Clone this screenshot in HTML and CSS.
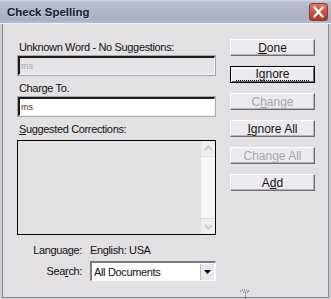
FILE: index.html
```html
<!DOCTYPE html>
<html>
<head>
<meta charset="utf-8">
<link rel="stylesheet" href="styles.css">
</head>
<body>
<div class="window">
  <div class="titlebar">
    <span class="title">Check Spelling</span>
    <span class="close">
      <svg width="19" height="18" viewBox="0 0 19 18"><path d="M5.5 4.5 L13.5 13.5 M13.5 4.5 L5.5 13.5" stroke="#fff" stroke-width="2.2" stroke-linecap="square"/></svg>
    </span>
  </div>
  <div class="client">
    <div class="left">
      <div class="label first">Unknown Word - No Suggestions:</div>
      <div class="field disabled"><span class="word">ms</span></div>
      <div class="label">Charge To.</div>
      <div class="field"><span class="word dark">ms</span></div>
      <div class="label"><u>S</u>uggested Corrections:</div>
      <div class="list">
        <div class="listbody"></div>
        <div class="scroll">
          <div class="sbtn"><svg width="13" height="13" viewBox="0 0 13 13"><path d="M3 8 L6.5 4.5 L10 8" fill="none" stroke="#d4d0c0" stroke-width="2"/></svg></div>
          <div class="strack"></div>
          <div class="sbtn"><svg width="13" height="13" viewBox="0 0 13 13"><path d="M3 5 L6.5 8.5 L10 5" fill="none" stroke="#d4d0c0" stroke-width="2"/></svg></div>
        </div>
      </div>
      <div class="row lang">
        <span class="rlabel">Language:</span>
        <span class="rvalue">English: USA</span>
      </div>
      <div class="row search">
        <span class="rlabel">Sea<u>r</u>ch:</span>
        <div class="select">
          <span class="seltext">All Documents</span>
          <span class="drop"><svg width="7" height="4" viewBox="0 0 7 4"><path d="M0 0 H7 L3.5 4 Z" fill="#000"/></svg></span>
        </div>
      </div>
    </div>
    <div class="buttons">
      <div class="btn"><u>D</u>one</div>
      <div class="btn default"><span class="focus">I<u>g</u>nore</span></div>
      <div class="btn off">C<u>h</u>ange</div>
      <div class="btn"><u>I</u>gnore All</div>
      <div class="btn off">Change All</div>
      <div class="btn">A<u>d</u>d</div>
    </div>
    <div class="grip"><svg width="12" height="10" viewBox="0 0 12 10"><path d="M1 2h1M3 1h1M5 1h1M7 1h1M9 2h1M6 3h1M6 5h1M6 7h1M6 9h1M4 3h1M8 3h1" stroke="#555" stroke-width="1"/></svg></div>
  </div>
</div>
</body>
</html>
```

FILE: styles.css
```css
html, body {
  margin: 0;
  padding: 0;
  background: #e3e0e4;
}
body {
  font-family: "Liberation Sans", Arial, sans-serif;
  font-size: 11px;
  letter-spacing: -0.35px;
  color: #111;
}
.window {
  width: 331px;
  height: 299px;
  box-sizing: border-box;
  display: flex;
  flex-direction: column;
  background: #e3e0e4;
  border-left: 2px solid #cfcdd3;
  border-right: 2px solid #cfcdd3;
  border-bottom: 1px solid #cfcdd3;
}
.titlebar {
  height: 23px;
  margin: 0 -2px;
  padding: 0 3px 0 7px;
  display: flex;
  align-items: center;
  justify-content: space-between;
  background: linear-gradient(#d9dce5 0, #b9bfcf 2px, #aeb5c7 12px, #a9b0c3 20px, #b8bdcc 23px);
  border-bottom: 1px solid #eef0f4;
}
.title {
  font-family: "Liberation Sans", Arial, sans-serif;
  font-weight: bold;
  font-size: 11.5px;
  letter-spacing: 0;
  color: #1a1a26;
  text-shadow: 1px 1px 0 #c8ccd8;
  padding-top: 1px;
}
.close {
  width: 19px;
  height: 18px;
  box-sizing: border-box;
  border: 1px solid #8a3a34;
  border-radius: 3px;
  background: linear-gradient(#e27a62, #c84a38 60%, #b23a2c);
  display: flex;
  margin-top: 1px;
}
.close svg {
  margin: -1px;
}
.client {
  flex: 1;
  position: relative;
  display: flex;
  gap: 14px;
  padding: 15px 13px 0 14px;
  border-left: 1px solid #85838a;
  border-right: 1px solid #85838a;
  border-bottom: 1px solid #85838a;
}
.left {
  width: 199px;
  display: flex;
  flex-direction: column;
}
.label {
  height: 13px;
  line-height: 13px;
  padding-left: 2px;
  margin-top: 7px;
}
.label.first {
  margin-top: 2px;
}
.field {
  margin-top: 2px;
  height: 19px;
  box-sizing: border-box;
  background: #fff;
  border-top: 2px solid #1a1a1a;
  border-left: 2px solid #1a1a1a;
  border-right: 1px solid #f6f6f8;
  border-bottom: 1px solid #f6f6f8;
  box-shadow: 0 0 0 1px #a9a7ad;
  margin-left: 1px;
  margin-right: 1px;
  display: flex;
  align-items: center;
}
.field.disabled {
  background: #e6e3e7;
}
.word {
  font-size: 9px;
  letter-spacing: 0;
  color: #aaa8ac;
  padding-left: 1px;
}
.word.dark {
  color: #5a1e1e;
}
.list {
  margin-top: 4px;
  height: 95px;
  box-sizing: border-box;
  border: 1px solid #000;
  display: flex;
  background: #e3e0e4;
}
.listbody {
  flex: 1;
}
.scroll {
  width: 14px;
  display: flex;
  flex-direction: column;
  background: #f7f6f8;
}
.sbtn {
  height: 15px;
  display: flex;
  align-items: center;
  justify-content: center;
  background: #f0eff0;
  border-bottom: 1px solid #dedbd0;
}
.sbtn:last-child {
  border-bottom: 0;
  border-top: 1px solid #dedbd0;
}
.strack {
  flex: 1;
}
.row {
  display: flex;
  align-items: center;
  gap: 8px;
}
.rlabel {
  width: 65px;
  text-align: right;
}
.lang {
  margin-top: 8px;
  height: 13px;
}
.search {
  margin-top: 5px;
}
.select {
  width: 126px;
  height: 20px;
  box-sizing: border-box;
  border-top: 2px solid #7b7a80;
  border-left: 2px solid #7b7a80;
  border-right: 1px solid #f8f8fa;
  border-bottom: 1px solid #f8f8fa;
  background: #fff;
  display: flex;
  align-items: center;
  justify-content: space-between;
}
.seltext {
  padding-left: 2px;
}
.drop {
  width: 14px;
  height: 16px;
  box-sizing: border-box;
  background: #e9e8ec;
  border-left: 1px solid #bdbcc2;
  display: flex;
  align-items: center;
  justify-content: center;
  margin-right: 1px;
}
.buttons {
  width: 85px;
  display: flex;
  flex-direction: column;
  gap: 10px;
}
.btn {
  height: 17px;
  box-sizing: border-box;
  display: flex;
  align-items: center;
  justify-content: center;
  font-size: 12px;
  letter-spacing: 0;
  background: #eceaee;
  border-top: 1px solid #fcfcfd;
  border-left: 1px solid #fcfcfd;
  border-right: 1px solid #6d6c72;
  border-bottom: 1px solid #6d6c72;
  box-shadow: inset -1px -1px 0 #b4b2b8;
}
.btn.default {
  border: 1px solid #000;
  box-shadow: inset 1px 1px 0 #fcfcfd, inset -1px -1px 0 #6d6c72;
}
.focus {
  border-bottom: 1px dotted #000;
  width: 73px;
  text-align: center;
  line-height: 11px;
}
.btn.off {
  color: #a8a6ac;
}
.grip {
  position: absolute;
  left: 236px;
  bottom: -2px;
  line-height: 0;
}
u {
  text-decoration: underline;
  text-underline-offset: 1px;
}
```
